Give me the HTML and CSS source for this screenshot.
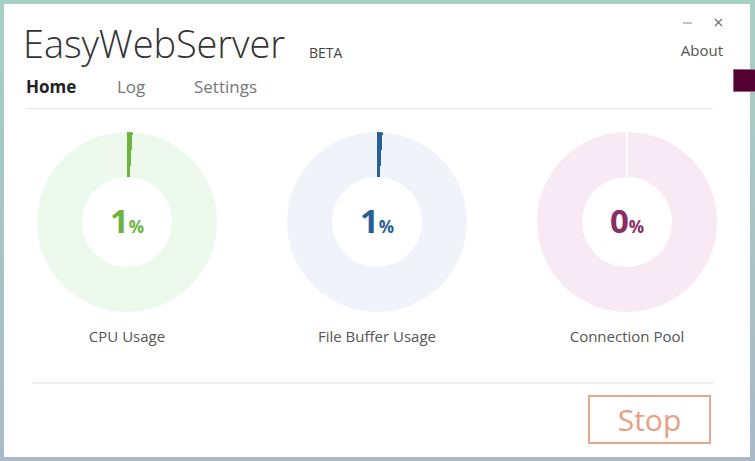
FILE: index.html
```html
<!DOCTYPE html>
<html>
<head>
<meta charset="utf-8">
<link rel="stylesheet" href="styles.css">
</head>
<body>
<div class="window">
  <header class="header">
    <div class="brand">
      <span class="title">EasyWebServer</span>
      <span class="beta">BETA</span>
    </div>
    <div class="right">
      <div class="controls">
        <svg class="ctl" width="9" height="9" viewBox="0 0 9 9"><line x1="0" y1="5" x2="9" y2="5" stroke="#9a9a9a" stroke-width="1.2"/></svg>
        <svg class="ctl" width="9" height="9" viewBox="0 0 9 9"><path d="M1 1 L8 8 M8 1 L1 8" stroke="#707070" stroke-width="1.2" fill="none"/></svg>
      </div>
      <a class="about">About</a>
    </div>
  </header>
  <nav class="nav">
    <a class="tab active">Home</a>
    <a class="tab">Log</a>
    <a class="tab">Settings</a>
  </nav>
  <section class="gauges">
    <div class="gauge cpu">
      <div class="donut" style="--p:1%"><div class="hole"><span class="num">1</span><span class="pct">%</span></div></div>
      <div class="label">CPU Usage</div>
    </div>
    <div class="gauge buf">
      <div class="donut" style="--p:1%"><div class="hole"><span class="num">1</span><span class="pct">%</span></div></div>
      <div class="label">File Buffer Usage</div>
    </div>
    <div class="gauge pool">
      <div class="donut zero" style="--p:0%"><div class="hole"><span class="num">0</span><span class="pct">%</span></div></div>
      <div class="label">Connection Pool</div>
    </div>
  </section>
  <footer class="footer">
    <button class="stop">Stop</button>
  </footer>
</div>
<div class="side-tag"></div>
</body>
</html>
```

FILE: styles.css
```css
html, body {
  margin: 0;
  padding: 0;
}
body {
  width: 755px;
  height: 461px;
  overflow: hidden;
  background: linear-gradient(180deg, #a7d0c5 0%, #a8c6c2 45%, #aab9c8 100%);
  font-family: "Open Sans", "Liberation Sans", sans-serif;
  padding: 4px 5px 4px 4px;
  box-sizing: border-box;
}
.window {
  background: #fff;
  width: 746px;
  height: 453px;
  box-sizing: border-box;
  padding: 0 37px 0 22px;
  display: flex;
  flex-direction: column;
}
.header {
  display: flex;
  justify-content: space-between;
  align-items: flex-start;
}
.brand {
  display: flex;
  align-items: baseline;
  margin-top: 14px;
  margin-left: -3px;
}
.title {
  font-size: 38px;
  font-weight: 300;
  color: #333;
  line-height: 50px;
  letter-spacing: -0.1px;
}
.beta {
  font-size: 14px;
  color: #444;
  margin-left: 24px;
}
.right {
  display: flex;
  flex-direction: column;
  align-items: flex-end;
  margin-right: -10px;
}
.controls {
  display: flex;
  gap: 22px;
  margin-top: 14px;
  height: 9px;
  align-items: center;
}
.ctl {
  display: block;
}
.about {
  font-size: 15px;
  color: #555;
  margin-top: 13px;
}
.nav {
  display: flex;
  margin-top: 7px;
  padding-bottom: 9px;
  border-bottom: 1px solid #e4e4e4;
}
.tab {
  font-size: 17px;
  color: #777;
  line-height: 24px;
}
.tab.active {
  font-weight: 700;
  color: #222;
  width: 91px;
}
.tab:nth-child(2) {
  width: 77px;
}
.gauges {
  display: grid;
  grid-template-columns: 240px 240px 240px;
  column-gap: 10px;
  margin-left: -19px;
  margin-top: 23px;
}
.gauge {
  display: flex;
  flex-direction: column;
  align-items: center;
}
.donut {
  width: 180px;
  height: 180px;
  border-radius: 50%;
  display: flex;
  align-items: center;
  justify-content: center;
  position: relative;
}
.cpu .donut { background: conic-gradient(#6db33f 0 var(--p), #eef9ee var(--p) 100%); }
.buf .donut { background: conic-gradient(#285f95 0 var(--p), #f0f4fa var(--p) 100%); }
.pool .donut { background: #f7eaf5; }
.donut.zero::before {
  content: "";
  position: absolute;
  top: 0;
  left: 89px;
  width: 2px;
  height: 46px;
  background: #fff;
}
.hole {
  width: 90px;
  height: 90px;
  border-radius: 50%;
  background: #fff;
  display: flex;
  align-items: baseline;
  justify-content: center;
  line-height: 88px;
  position: relative;
  z-index: 1;
}
.num {
  font-size: 33px;
  font-weight: 700;
}
.pct {
  font-size: 17px;
  font-weight: 700;
}
.cpu .num, .cpu .pct { color: #6db33f; }
.buf .num, .buf .pct { color: #285f95; }
.pool .num, .pool .pct { color: #8a2c66; }
.label {
  font-size: 15px;
  color: #555;
  margin-top: 14px;
}
.footer {
  margin-top: 36px;
  margin-left: 6px;
  border-top: 2px solid #eeeeee;
  display: flex;
  justify-content: flex-end;
  padding-top: 11px;
}
.stop {
  width: 123px;
  height: 49px;
  border: 2px solid #eaa68c;
  background: #fff;
  color: #e6a084;
  font-family: "Open Sans", "Liberation Sans", sans-serif;
  font-size: 30px;
  font-weight: 400;
  padding: 0;
  line-height: 1;
  margin-right: 2px;
}
.side-tag {
  position: absolute;
  left: 733px;
  top: 69px;
  width: 22px;
  height: 23px;
  box-sizing: border-box;
  background: #550032;
  border: 1px solid #9a6a85;
  border-right: none;
}
```
